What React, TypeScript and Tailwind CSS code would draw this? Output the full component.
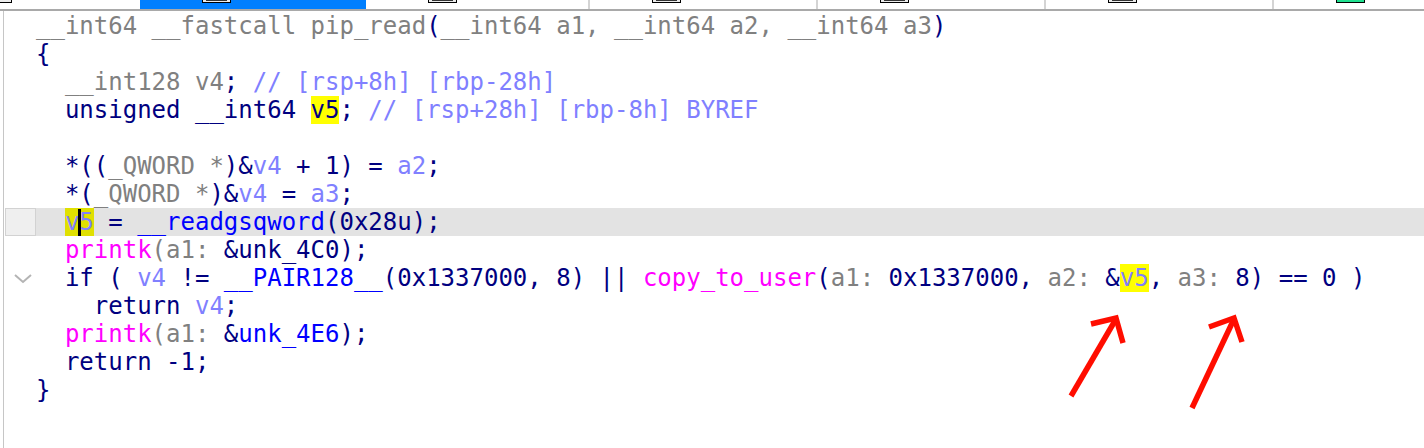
import React from 'react';

type Seg = { c: string; t: string; hl?: string };

const N = 'text-[#000080]';
const G = 'text-[#808080]';
const L = 'text-[#8080ff]';
const B = 'text-[#0000ff]';
const M = 'text-[#ff00ff]';

const s = (c: string, t: string, hl?: string): Seg => ({ c, t, hl });

const lines: Seg[][] = [
  [s(G, '__int64 __fastcall pip_read'), s(N, '('), s(G, '__int64 a1, __int64 a2, __int64 a3'), s(N, ')')],
  [s(N, '{')],
  [s(G, '  __int128 v4'), s(N, ';'), s(L, ' // [rsp+8h] [rbp-28h]')],
  [s(N, '  unsigned __int64 '), s(N, 'v5', 'bg-[#ffff00]'), s(N, ';'), s(L, ' // [rsp+28h] [rbp-8h] BYREF')],
  [],
  [s(N, '  *(('), s(G, '_QWORD *'), s(N, ')&'), s(L, 'v4'), s(N, ' + 1) = '), s(L, 'a2'), s(N, ';')],
  [s(N, '  *('), s(G, '_QWORD *'), s(N, ')&'), s(L, 'v4'), s(N, ' = '), s(L, 'a3'), s(N, ';')],
  [],
  [s(N, '  '), s(M, 'printk'), s(G, '(a1: '), s(N, '&unk_4C0);')],
  [
    s(N, '  if ( '), s(L, 'v4'), s(N, ' != '), s(B, '__PAIR128__'), s(N, '(0x1337000, 8) || '),
    s(M, 'copy_to_user'), s(N, '('), s(G, 'a1: '), s(N, '0x1337000, '), s(G, 'a2: '), s(N, '&'),
    s(L, 'v5', 'bg-[#ffff00]'), s(N, ', '), s(G, 'a3: '), s(N, '8) == 0 )'),
  ],
  [s(N, '    return '), s(L, 'v4'), s(N, ';')],
  [s(N, '  '), s(M, 'printk'), s(G, '(a1: '), s(N, '&'), s(B, 'unk_4E6'), s(N, ');')],
  [s(N, '  return -1;')],
  [s(N, '}')],
];

const TabIcon = ({ green }: { green?: boolean }) => (
  <div className={`w-[29px] h-[3px] border-x border-b border-black ${green ? 'bg-[#1fe08f]' : 'bg-[#ececec]'}`}>
    {!green && <div className="mx-[3px] h-[1px] bg-[#333]" />}
  </div>
);

const Tab = ({ green }: { green?: boolean }) => (
  <div className="w-[228px] shrink-0 h-full pl-[62px] border-r-2 border-[#d4d4d4]">
    <TabIcon green={green} />
  </div>
);

export default function App() {
  return (
    <div className="relative flex flex-col w-[1424px] h-[448px] overflow-hidden bg-white" style={{ fontFamily: '"DejaVu Sans Mono", "Liberation Mono", monospace' }}>
      {/* tab strip */}
      <div className="flex h-[9px] shrink-0 overflow-hidden">
        <div className="w-[140px] shrink-0">
          <div className="w-[12px] h-[3px] border-r border-b border-black bg-[#ececec]" />
        </div>
        <div className="w-[226px] shrink-0 h-full pl-[62px] bg-[#007fff]">
          <TabIcon />
        </div>
        <div className="w-[224px] shrink-0 h-full pl-[62px] border-r-2 border-[#d4d4d4]">
          <TabIcon />
        </div>
        <Tab />
        <Tab />
        <Tab />
        <Tab green />
      </div>
      <div className="h-[2px] shrink-0 bg-[#a9a9a9]" />

      {/* code view */}
      <div className="flex-1 ml-[3px] border-l border-[#c6c6c6] pt-[1px] text-[24px] leading-[28px]">
        {lines.map((segs, i) => (
          <div key={i} className="flex h-[28px]">
            <div className="w-[32px] shrink-0 relative">
              {i === 7 && (
                <div className="ml-[1px] h-[28px] w-[31px] border border-[#d2d2d2] bg-[#efefef]" />
              )}
              {i === 9 && (
                <svg className="absolute left-[10px] top-[10px]" width="18" height="10" viewBox="0 0 18 10">
                  <polyline points="1,1 9,8 17,1" fill="none" stroke="#b4b4b4" strokeWidth="2" />
                </svg>
              )}
            </div>
            {i === 7 ? (
              <div className="flex-1 whitespace-pre bg-[#e3e3e3]">
                <span className={N}>  </span>
                <span className={`${L} bg-[#e0e000]`}>v</span>
                <span className="relative inline-block w-0 h-[28px] align-top">
                  <span className="absolute left-[-1px] top-[1px] w-[3px] h-[27px] bg-black" />
                </span>
                <span className={`${L} bg-[#e0e000]`}>5</span>
                <span className={N}> = </span>
                <span className={B}>__readgsqword</span>
                <span className={N}>(0x28u);</span>
              </div>
            ) : (
              <div className="flex-1 whitespace-pre">
                {segs.map((g, j) => (
                  <span key={j} className={`${g.c} ${g.hl ?? ''}`}>{g.t}</span>
                ))}
              </div>
            )}
          </div>
        ))}
      </div>

      {/* red annotation arrows */}
      <svg className="absolute left-0 top-0 pointer-events-none" width="1424" height="448">
        <g stroke="#ff0d00" strokeWidth="5.5" fill="none" strokeLinecap="butt" strokeLinejoin="miter">
          <line x1="1071" y1="396" x2="1116" y2="319" />
          <polyline points="1091,324 1116,318 1123,343" />
          <line x1="1192" y1="408" x2="1234" y2="319" />
          <polyline points="1209,327 1234,318 1242,342" />
        </g>
      </svg>
    </div>
  );
}
